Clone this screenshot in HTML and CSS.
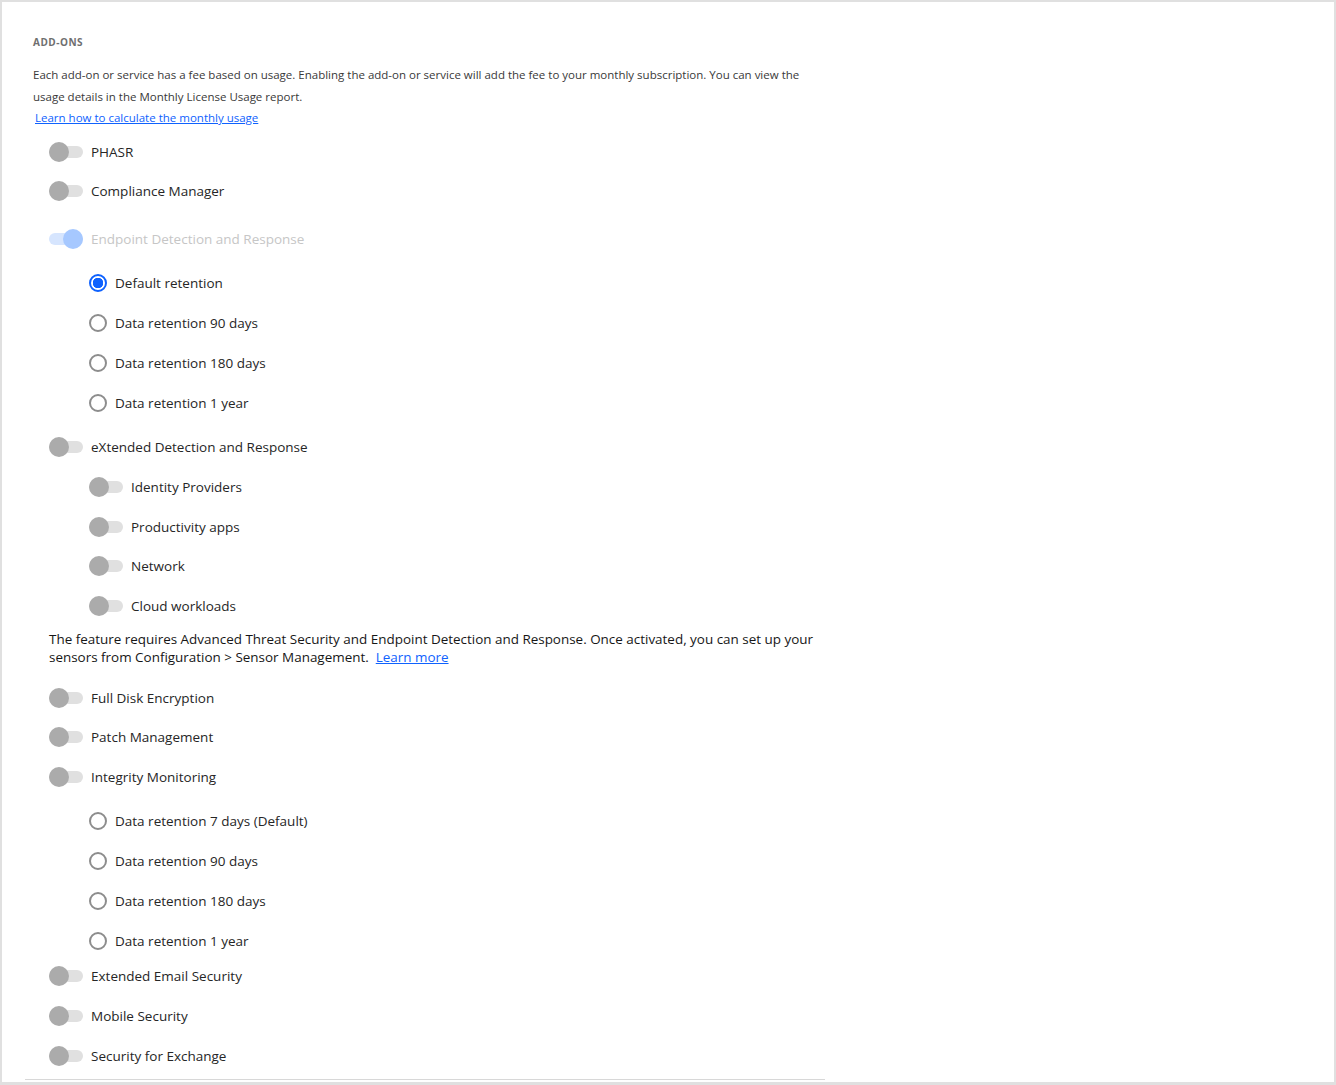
FILE: index.html
```html
<!DOCTYPE html>
<html lang="en">
<head>
<meta charset="utf-8">
<title>Add-ons</title>
<link rel="stylesheet" href="styles.css">
</head>
<body>
<div class="frame">
  <section class="addons">
    <h2 class="title">ADD-ONS</h2>
    <p class="desc">Each add-on or service has a fee based on usage. Enabling the add-on or service will add the fee to your monthly subscription. You can view the usage details in the Monthly License Usage report.</p>
    <a class="link calc" href="#">Learn how to calculate the monthly usage</a>

    <div class="list">
      <div class="row r-first"><span class="toggle"><span class="knob"></span></span><span class="label">PHASR</span></div>
      <div class="row r-cm"><span class="toggle"><span class="knob"></span></span><span class="label">Compliance Manager</span></div>
      <div class="row r-edr"><span class="toggle on disabled"><span class="knob"></span></span><span class="label muted">Endpoint Detection and Response</span></div>

      <div class="group">
        <div class="row radio-row"><span class="radio checked"></span><span class="rlabel">Default retention</span></div>
        <div class="row radio-row"><span class="radio"></span><span class="rlabel">Data retention 90 days</span></div>
        <div class="row radio-row"><span class="radio"></span><span class="rlabel">Data retention 180 days</span></div>
        <div class="row radio-row"><span class="radio"></span><span class="rlabel">Data retention 1 year</span></div>
      </div>

      <div class="row r-after-group"><span class="toggle"><span class="knob"></span></span><span class="label">eXtended Detection and Response</span></div>
      <div class="group nested">
        <div class="row"><span class="toggle"><span class="knob"></span></span><span class="label">Identity Providers</span></div>
        <div class="row"><span class="toggle"><span class="knob"></span></span><span class="label">Productivity apps</span></div>
        <div class="row r-net"><span class="toggle"><span class="knob"></span></span><span class="label">Network</span></div>
        <div class="row"><span class="toggle"><span class="knob"></span></span><span class="label">Cloud workloads</span></div>
      </div>
      <div class="note">
        <span class="note-line">The feature requires Advanced Threat Security and Endpoint Detection and Response. Once activated, you can set up your</span>
        <span class="note-line"><span>sensors from Configuration &gt; Sensor Management.</span><a class="link more" href="#">Learn more</a></span>
      </div>

      <div class="row r-fde"><span class="toggle"><span class="knob"></span></span><span class="label">Full Disk Encryption</span></div>
      <div class="row r-pm"><span class="toggle"><span class="knob"></span></span><span class="label">Patch Management</span></div>
      <div class="row"><span class="toggle"><span class="knob"></span></span><span class="label">Integrity Monitoring</span></div>

      <div class="group tight">
        <div class="row radio-row"><span class="radio"></span><span class="rlabel">Data retention 7 days (Default)</span></div>
        <div class="row radio-row"><span class="radio"></span><span class="rlabel">Data retention 90 days</span></div>
        <div class="row radio-row"><span class="radio"></span><span class="rlabel">Data retention 180 days</span></div>
        <div class="row radio-row"><span class="radio"></span><span class="rlabel">Data retention 1 year</span></div>
      </div>

      <div class="row r-ees"><span class="toggle"><span class="knob"></span></span><span class="label">Extended Email Security</span></div>
      <div class="row"><span class="toggle"><span class="knob"></span></span><span class="label">Mobile Security</span></div>
      <div class="row"><span class="toggle"><span class="knob"></span></span><span class="label">Security for Exchange</span></div>
    </div>
    <div class="rule"></div>
  </section>
</div>
</body>
</html>
```

FILE: styles.css
```css
* { box-sizing: border-box; }
html, body { margin: 0; padding: 0; }
body {
  background: #ffffff;
  font-family: "Open Sans", "Noto Sans", sans-serif;
  color: #262626;
}
.frame {
  width: 1336px;
  height: 1085px;
  border: 2px solid #e0e0e0;
  border-bottom-width: 3px;
  background: #ffffff;
  overflow: hidden;
}
.addons {
  width: 800px;
  margin-left: 23px;
  padding-top: 33px;
}
.title {
  margin: 0;
  padding-left: 8px;
  font-size: 10px;
  line-height: 14px;
  font-weight: 700;
  letter-spacing: 0.5px;
  color: #6f6f6f;
}
.desc {
  margin: 15px 0 0;
  padding-left: 8px;
  font-size: 11.5px;
  line-height: 22px;
  color: #393939;
}
.link {
  color: #0f62fe;
  text-decoration: underline;
}
.calc {
  display: block;
  margin-left: 10px;
  font-size: 11.5px;
  line-height: 20px;
}
.list {
  padding-left: 24px;
}
.row {
  display: flex;
  align-items: center;
  height: 40px;
}
.r-first { margin-top: 4px; }
.r-cm { margin-top: -1px; }
.r-edr { margin-top: 8px; }
.group { margin-top: 4px; }
.r-after-group { margin-top: 4px; }
.nested { margin-top: 0; padding-left: 40px; }
.r-net { margin-top: -1px; }
.tight { margin-top: 4px; }
.r-fde { margin-top: 12px; }
.r-pm { margin-top: -1px; }
.r-ees { margin-top: -5px; }

.toggle {
  position: relative;
  flex: none;
  width: 34px;
  height: 12px;
  border-radius: 6px;
  background: #e0e0e0;
  margin-right: 8px;
}
.knob {
  position: absolute;
  left: 0;
  top: -4px;
  width: 20px;
  height: 20px;
  border-radius: 50%;
  background: #ababab;
}
.toggle.on.disabled { background: #d6e5fe; }
.toggle.on.disabled .knob { left: 14px; background: #a6c8ff; }

.label {
  font-size: 13.5px;
  color: #262626;
}
.label.muted { color: #c6c6c6; }

.radio-row { padding-left: 40px; }
.radio {
  flex: none;
  width: 18px;
  height: 18px;
  border-radius: 50%;
  border: 2px solid #8d8d8d;
  margin-right: 8px;
  background: #fff;
}
.radio.checked {
  border-color: #0f62fe;
  background: radial-gradient(circle, #0f62fe 0 5px, #ffffff 5.5px);
}
.rlabel {
  font-size: 13.5px;
  color: #262626;
}
.note {
  margin-top: 4px;
  display: flex;
  flex-direction: column;
  font-size: 13.45px;
  line-height: 18px;
  color: #161616;
}
.note-line {
  display: flex;
  white-space: nowrap;
}
.more {
  margin-left: 7px;
}
.rule {
  margin-top: 3px;
  height: 1px;
  width: 800px;
  background: #d8d8d8;
}
```
